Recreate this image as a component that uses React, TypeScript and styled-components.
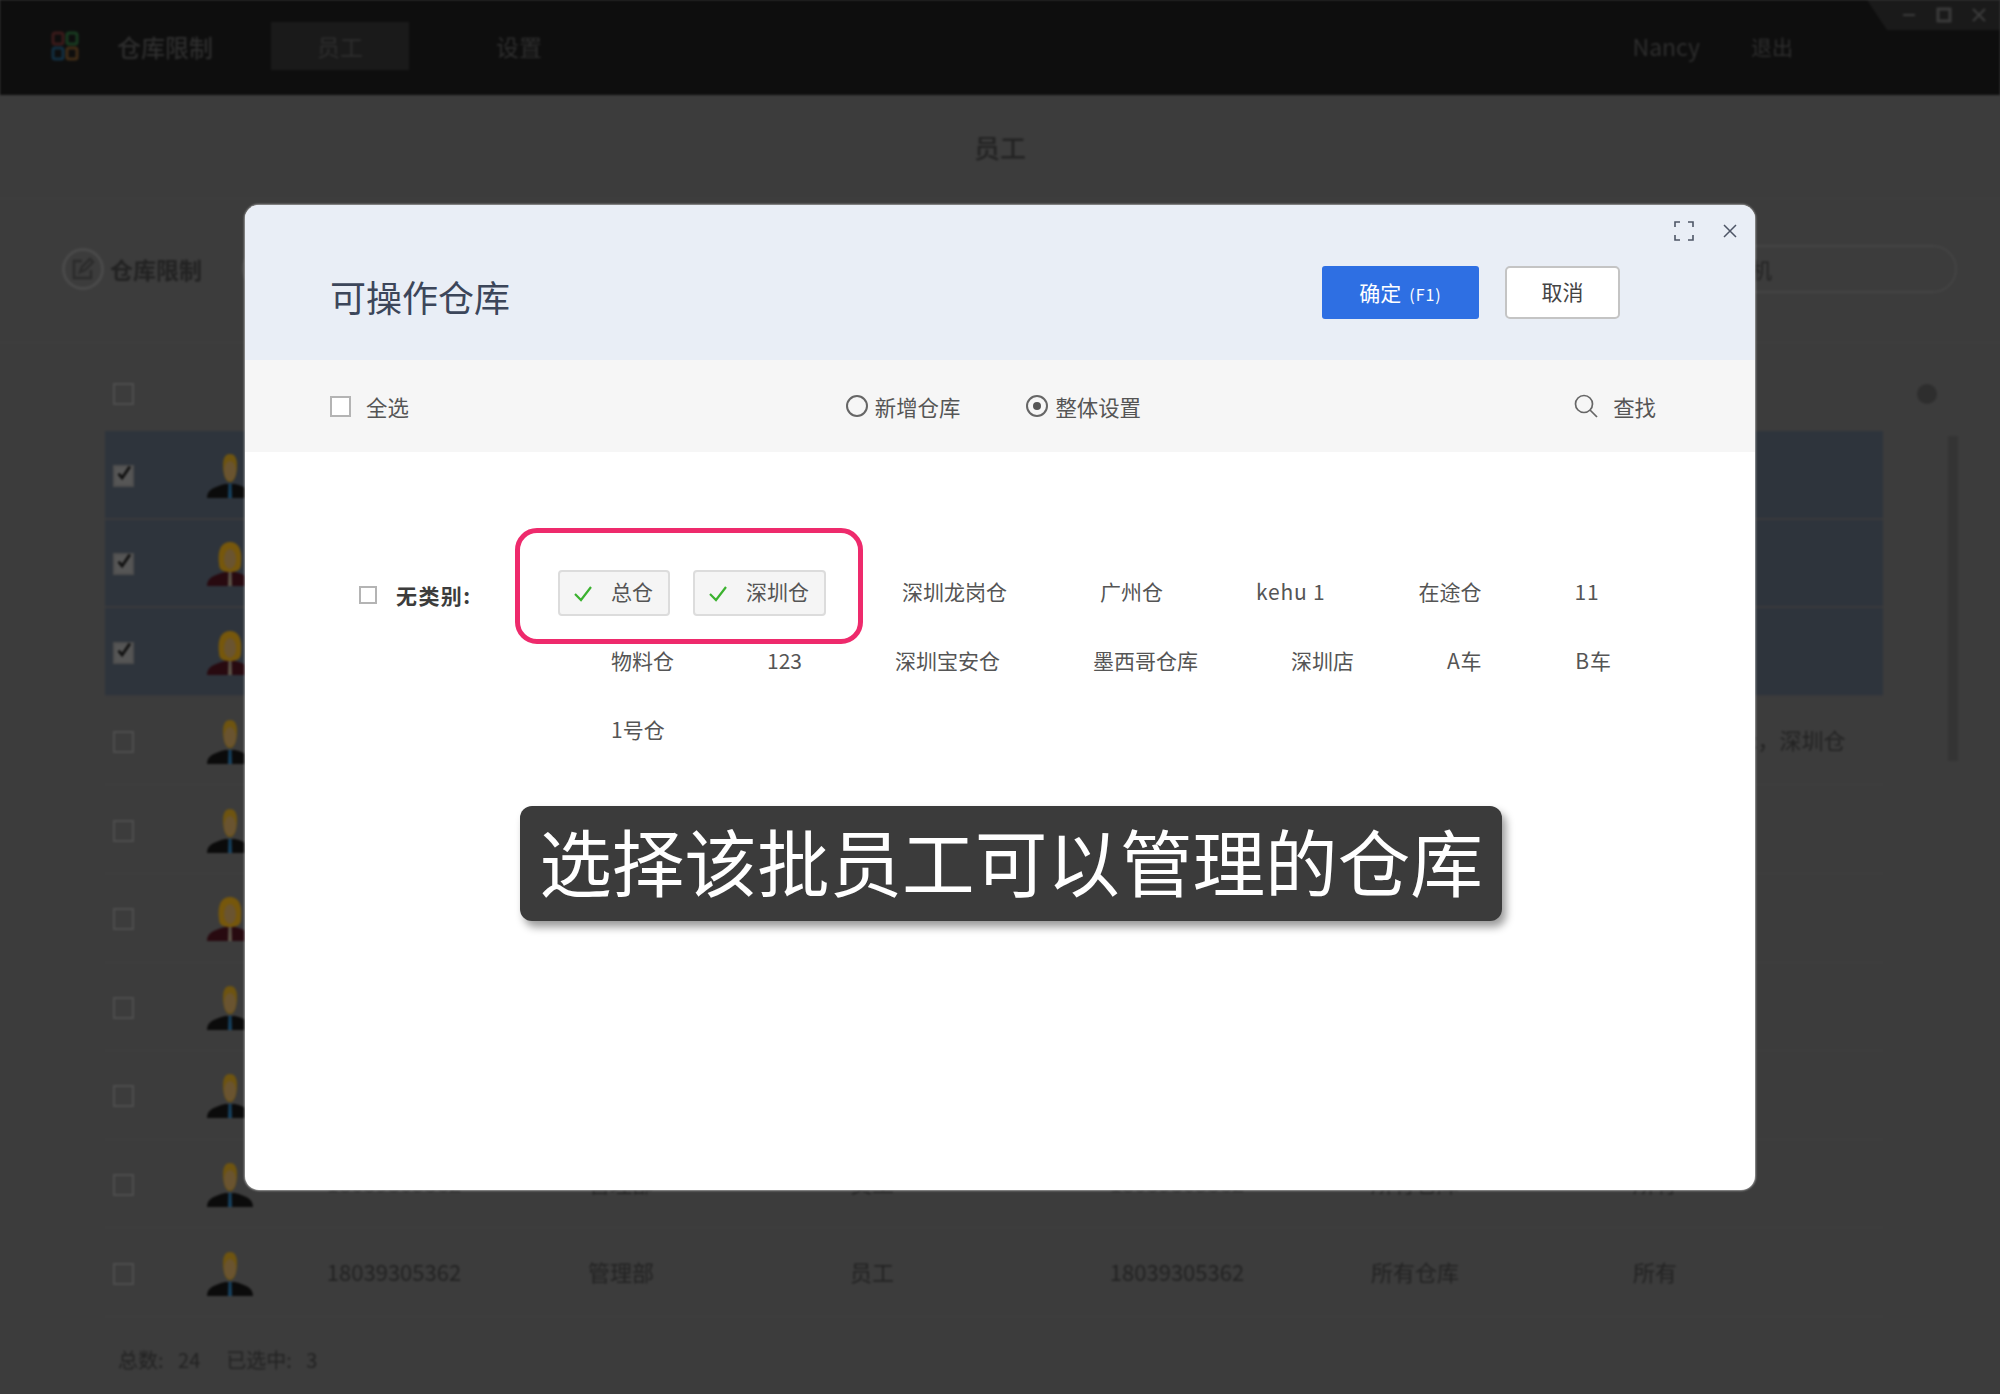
import * as React from 'react';
import styled, {createGlobalStyle} from 'styled-components';

const GlobalStyle = createGlobalStyle`
	html, body {
		margin: 0;
		padding: 0;
		background: #3c3c3c;
	}
	* {
		box-sizing: border-box;
	}
	body {
		font-family: "Noto Sans CJK SC", "Noto Sans", sans-serif;
	}
`;

const Screen = styled.div`
	height: 1394px;
	overflow: hidden;
	position: relative;
	width: 2000px;
`;

/* the app behind the dialog: dimmed and blurred */
const Backdrop = styled.div`
	background: #3c3c3c;
	color: #222;
	filter: blur(1.3px);
	height: 100%;
`;

const TopBar = styled.header`
	align-items: center;
	background: #0e0e0e;
	color: #2e2e2e;
	display: flex;
	font-size: 23px;
	height: 95px;
	padding: 0 207px 3px 51px;
	position: relative;
`;

const BarTitle = styled.span`
	font-size: 24px;
	font-weight: 500;
	margin: 0 58px 0 38px;
`;

const BarTab = styled.span<{$active?: boolean}>`
	background: ${(p) => (p.$active ? '#1a1a1a' : 'transparent')};
	height: 48px;
	line-height: 48px;
	text-align: center;
	width: ${(p) => (p.$active ? '138px' : 'auto')};
	margin-left: ${(p) => (p.$active ? '0' : '87px')};
`;

const BarUser = styled.span`
	margin-left: auto;
`;

const BarLogout = styled.span`
	font-size: 21px;
	margin-left: 51px;
`;

const WindowControls = styled.div`
	align-items: center;
	background: #1a1a1a;
	clip-path: polygon(0 0, 100% 0, 100% 100%, 15% 100%);
	color: #3a3a3a;
	display: flex;
	gap: 20px;
	height: 30px;
	justify-content: flex-end;
	padding-right: 14px;
	position: absolute;
	right: 0;
	top: 0;
	width: 133px;
`;

const PageTitle = styled.div`
	border-bottom: 1px solid #404040;
	font-size: 26px;
	font-weight: 500;
	height: 104px;
	line-height: 104px;
	text-align: center;
`;

const ToolRow = styled.div`
	align-items: center;
	border-bottom: 1px solid #404040;
	display: flex;
	height: 144px;
	padding: 0 43px 4px 62px;
`;

const ToolCircle = styled.span`
	align-items: center;
	border: 3px solid #4a4a4a;
	border-radius: 50%;
	display: inline-flex;
	height: 42px;
	justify-content: center;
	margin-right: 6px;
	width: 42px;
`;

const ToolLabel = styled.span`
	font-size: 23px;
	font-weight: 700;
	margin-right: 40px;
`;

const SearchPill = styled.div`
	align-items: center;
	border: 2px solid #444;
	border-radius: 24px;
	display: flex;
	font-size: 21px;
	height: 48px;
	margin-left: auto;
	padding-left: 286px;
	width: 557px;
`;

const Row = styled.div<{$selected?: boolean; $head?: boolean}>`
	align-items: center;
	background: ${(p) => (p.$selected ? '#2e343c' : 'transparent')};
	border-bottom: ${(p) => (p.$head ? '0' : p.$selected ? '2px solid #3a3a3c' : '1px solid #404040')};
	display: grid;
	font-size: 22px;
	grid-template-columns: 100px 50px 278px 176px 326px 284px 192px 288px;
	height: ${(p) => (p.$head ? '88px' : '88.6px')};
	margin: 0 117px 0 105px;
	padding-top: ${(p) => (p.$head ? '14px' : '3px')};
`;

const Cell = styled.span`
	justify-self: center;
	margin-bottom: 6px;
	white-space: nowrap;
`;

const LastCell = styled(Cell)`
	grid-column: 8;
`;

const Tick = styled.span<{$on?: boolean}>`
	align-items: center;
	background: ${(p) => (p.$on ? '#565656' : 'transparent')};
	border: 2px solid #4e4e4e;
	display: flex;
	height: 22px;
	justify-content: center;
	margin-left: 8px;
	width: 21px;
`;

const TickSvg = styled.svg`
	margin-top: -6px;
`;

const SettingsDot = styled.span`
	background: #2e2e2e;
	border-radius: 50%;
	height: 20px;
	position: absolute;
	right: 63px;
	top: 384px;
	width: 20px;
`;

const ScrollThumb = styled.span`
	background: #343434;
	height: 325px;
	position: absolute;
	right: 42px;
	top: 436px;
	width: 10px;
`;

const Footer = styled.footer`
	align-items: center;
	display: flex;
	font-size: 20px;
	gap: 26px;
	height: 86px;
	padding-left: 118px;
	word-spacing: 10px;
`;

/* dialog */
const Dialog = styled.section`
	background: #fff;
	border-radius: 14px;
	box-shadow: 0 0 2px 1px rgba(190, 190, 190, 0.7);
	height: 985px;
	left: 245px;
	overflow: hidden;
	position: absolute;
	top: 205px;
	width: 1510px;
`;

const DialogHead = styled.div`
	align-items: center;
	background: #e9eef6;
	display: flex;
	height: 155px;
	padding: 20px 135px 0 85px;
	position: relative;
`;

const DialogTitle = styled.h2`
	color: #3c465a;
	font-size: 36px;
	font-weight: 400;
	line-height: 50px;
	margin: 6px auto 0 0;
`;

const OkButton = styled.button`
	background: #2e6fe3;
	border: 0;
	border-radius: 3px;
	color: #fff;
	font: inherit;
	font-size: 21px;
	height: 53px;
	margin-right: 26px;
	padding: 0 0 2px;
	width: 157px;
	small {
		font-size: 16px;
		letter-spacing: 1px;
		margin-left: 8px;
	}
`;

const CancelButton = styled.button`
	background: #fff;
	border: 2px solid #c4c4c4;
	border-radius: 5px;
	color: #444;
	font: inherit;
	font-size: 21px;
	height: 53px;
	padding: 0 0 4px;
	width: 115px;
`;

const HeadIcons = styled.div`
	align-items: center;
	color: #556;
	display: flex;
	gap: 29px;
	position: absolute;
	right: 18px;
	top: 16px;
`;

const ToolBar = styled.div`
	align-items: center;
	background: #f6f6f6;
	color: #555;
	display: flex;
	font-size: 21.4px;
	height: 92px;
	padding: 0 99px 0 85px;
`;

const Box = styled.span<{$size: number}>`
	background: #fff;
	border: 2px solid #b4b4b4;
	display: inline-block;
	flex: none;
	height: ${(p) => p.$size}px;
	width: ${(p) => p.$size}px;
`;

const CheckAll = styled.label`
	align-items: center;
	display: flex;
	gap: 15px;
`;

const RadioGroup = styled.div`
	display: flex;
	gap: 66px;
	margin-left: 437px;
`;

const Radio = styled.label`
	align-items: center;
	display: flex;
	gap: 7px;
`;

const RadioDot = styled.span<{$on?: boolean}>`
	align-items: center;
	border: 2px solid #666;
	border-radius: 50%;
	display: flex;
	height: 22px;
	justify-content: center;
	width: 22px;
	&::after {
		background: #555;
		border-radius: 50%;
		content: '';
		display: ${(p) => (p.$on ? 'block' : 'none')};
		height: 8px;
		width: 8px;
	}
`;

const FindLink = styled.span`
	align-items: center;
	display: flex;
	gap: 15px;
	margin-left: auto;
`;

const DialogBody = styled.div`
	display: flex;
	padding: 118px 95px 0 114px;
`;

const GroupHead = styled.div`
	align-items: center;
	align-self: flex-start;
	display: flex;
	gap: 19px;
	height: 50px;
	width: 199px;
`;

const GroupName = styled.span`
	color: #3c3c3c;
	font-size: 21px;
	font-weight: 700;
	letter-spacing: 1.4px;
`;

const Stores = styled.ul`
	display: flex;
	flex: 1;
	flex-wrap: wrap;
	list-style: none;
	margin: 0;
	padding: 0;
`;

const Store = styled.li<{$on?: boolean; $latin?: boolean}>`
	align-items: center;
	background: ${(p) => (p.$on ? '#f5f5f5' : 'transparent')};
	border: 2px solid ${(p) => (p.$on ? '#dcdcdc' : 'transparent')};
	border-radius: 4px;
	color: #555;
	display: flex;
	font-size: 21px;
	height: 46px;
	letter-spacing: ${(p) => (p.$latin ? '0.8px' : '0')};
	margin: 0 23px 23px 0;
	padding: 0 15px 5px 51px;
	position: relative;
	svg {
		left: 13px;
		position: absolute;
		top: 13px;
	}
`;

const Marker = styled.div`
	border: 5px solid #ee2a6c;
	border-radius: 22px;
	height: 116px;
	left: 270px;
	pointer-events: none;
	position: absolute;
	top: 323px;
	width: 348px;
`;

const Caption = styled.div`
	align-items: center;
	background: #3b3b3b;
	border-radius: 12px;
	box-shadow: 4px 6px 8px rgba(0, 0, 0, 0.4);
	color: #fff;
	display: flex;
	font-size: 72.6px;
	font-weight: 400;
	height: 115px;
	justify-content: center;
	left: 275px;
	padding-bottom: 8px;
	position: absolute;
	top: 601px;
	white-space: nowrap;
	width: 982px;
`;

const AvatarSvg = styled.svg`
	margin-left: 2px;
`;

const Logo = () =>
	<svg width="28" height="30" viewBox="0 0 28 30" fill="none" strokeWidth="3">
		<rect x="2" y="2" width="10" height="11" rx="2" stroke="#3a1a1a" />
		<rect x="16" y="2" width="10" height="11" rx="2" stroke="#183a20" />
		<rect x="2" y="17" width="10" height="11" rx="2" stroke="#122e40" />
		<rect x="16" y="17" width="10" height="11" rx="2" stroke="#402c16" />
	</svg>;

const Avatar = ({female}: {female: boolean}) =>
	<AvatarSvg width="46" height="44" viewBox="0 0 46 44">
		{female ?
			<path d="M12 22 C10 4 17 0 23 0 C29 0 36 4 34 22 C34 28 30 30 23 30 C16 30 12 28 12 22Z" fill="#76570c" /> :
			<path d="M16 11 C16 3 19 0 23 0 C27 0 30 3 30 11 C30 22 27 28 23 28 C19 28 16 22 16 11Z" fill="#6e5410" />}
		<ellipse cx="23" cy="17" rx="6" ry="10" fill="#6a5430" />
		<path d="M0 44 C0 35 8 33 18 30 L28 30 C38 33 46 35 46 44Z" fill={female ? '#280a10' : '#0b0b0b'} />
		<path d="M21.5 30 L24.5 30 L25 44 L21 44Z" fill={female ? '#5c5448' : '#16405e'} />
	</AvatarSvg>;

const TickMark = () =>
	<TickSvg width="24" height="24" viewBox="0 0 24 24" fill="none" stroke="#111" strokeWidth="4">
		<path d="M5 13 L10 19 L21 3" />
	</TickSvg>;

const GreenCheck = () =>
	<svg width="20" height="18" viewBox="0 0 20 18" fill="none" stroke="#3bb22f" strokeWidth="2.2">
		<path d="M2 9 L8 15 L18 2" />
	</svg>;

const ExpandIcon = () =>
	<svg width="20" height="20" viewBox="0 0 20 20" fill="none" stroke="#4d5566" strokeWidth="1.6">
		<path d="M1 6 V1 H6 M14 1 H19 V6 M19 14 V19 H14 M6 19 H1 V14" />
	</svg>;

const CloseIcon = () =>
	<svg width="14" height="14" viewBox="0 0 14 14" fill="none" stroke="#4d5566" strokeWidth="1.5">
		<path d="M1 1 L13 13 M13 1 L1 13" />
	</svg>;

const SearchIcon = () =>
	<svg width="24" height="24" viewBox="0 0 24 24" fill="none" stroke="#666" strokeWidth="1.7">
		<circle cx="10" cy="10" r="8.5" />
		<path d="M16 16 L23 23" />
	</svg>;

const rows = [false, true, true, false, false, true, false, false, false, false];

const warehouses = [
	{name: '总仓', on: true},
	{name: '深圳仓', on: true},
	{name: '深圳龙岗仓'},
	{name: '广州仓'},
	{name: 'kehu 1', latin: true},
	{name: '在途仓'},
	{name: '11', latin: true},
	{name: '物料仓'},
	{name: '123'},
	{name: '深圳宝安仓'},
	{name: '墨西哥仓库'},
	{name: '深圳店'},
	{name: 'A车', latin: true},
	{name: 'B车', latin: true},
	{name: '1号仓'},
];

const App: React.FC = () =>
	<Screen>
		<GlobalStyle />
		<Backdrop>
			<TopBar>
				<Logo />
				<BarTitle>仓库限制</BarTitle>
				<BarTab $active>员工</BarTab>
				<BarTab>设置</BarTab>
				<BarUser>Nancy</BarUser>
				<BarLogout>退出</BarLogout>
				<WindowControls>
					<svg width="14" height="14" viewBox="0 0 14 14" stroke="#3a3a3a" strokeWidth="2"><path d="M1 7 H13" /></svg>
					<svg width="16" height="16" viewBox="0 0 16 16" fill="none" stroke="#3a3a3a" strokeWidth="3"><rect x="2" y="2" width="12" height="12" /></svg>
					<svg width="14" height="14" viewBox="0 0 14 14" stroke="#3a3a3a" strokeWidth="2.4"><path d="M1 1 L13 13 M13 1 L1 13" /></svg>
				</WindowControls>
			</TopBar>
			<PageTitle>员工</PageTitle>
			<ToolRow>
				<ToolCircle>
					<svg width="24" height="24" viewBox="0 0 24 24" fill="none" stroke="#2b2b2b" strokeWidth="2.4">
						<path d="M20 13 V21 H3 V4 H11 M9 15 L11 10 L19 2 L22 5 L14 13Z" />
					</svg>
				</ToolCircle>
				<ToolLabel>仓库限制</ToolLabel>
				<ToolCircle />
				<SearchPill>查找手机</SearchPill>
			</ToolRow>
			<Row $head>
				<Tick />
			</Row>
			{rows.map((female, i) =>
				<Row key={i} $selected={i < 3}>
					<Tick $on={i < 3}>{i < 3 && <TickMark />}</Tick>
					<Avatar female={female} />
					{i >= 8 && <Cell>18039305362</Cell>}
					{i >= 8 && <Cell>管理部</Cell>}
					{i >= 8 && <Cell>员工</Cell>}
					{i >= 8 && <Cell>18039305362</Cell>}
					{i >= 8 && <Cell>所有仓库</Cell>}
					{i >= 8 && <Cell>所有</Cell>}
					{i === 3 && <LastCell>总仓，kehu 1，在途仓，1abc，深圳仓</LastCell>}
				</Row>
			)}
			<Footer>
				<span>总数: 24</span>
				<span>已选中: 3</span>
			</Footer>
			<SettingsDot />
			<ScrollThumb />
		</Backdrop>
		<Dialog>
			<DialogHead>
				<DialogTitle>可操作仓库</DialogTitle>
				<OkButton>确定<small>(F1)</small></OkButton>
				<CancelButton>取消</CancelButton>
				<HeadIcons>
					<ExpandIcon />
					<CloseIcon />
				</HeadIcons>
			</DialogHead>
			<ToolBar>
				<CheckAll>
					<Box $size={21} />
					全选
				</CheckAll>
				<RadioGroup>
					<Radio><RadioDot />新增仓库</Radio>
					<Radio><RadioDot $on />整体设置</Radio>
				</RadioGroup>
				<FindLink>
					<SearchIcon />
					查找
				</FindLink>
			</ToolBar>
			<DialogBody>
				<GroupHead>
					<Box $size={18} />
					<GroupName>无类别:</GroupName>
				</GroupHead>
				<Stores>
					{warehouses.map((w) =>
						<Store key={w.name} $on={w.on} $latin={w.latin}>
							{w.on && <GreenCheck />}
							{w.name}
						</Store>
					)}
				</Stores>
			</DialogBody>
			<Marker />
			<Caption>选择该批员工可以管理的仓库</Caption>
		</Dialog>
	</Screen>;

export default App;
